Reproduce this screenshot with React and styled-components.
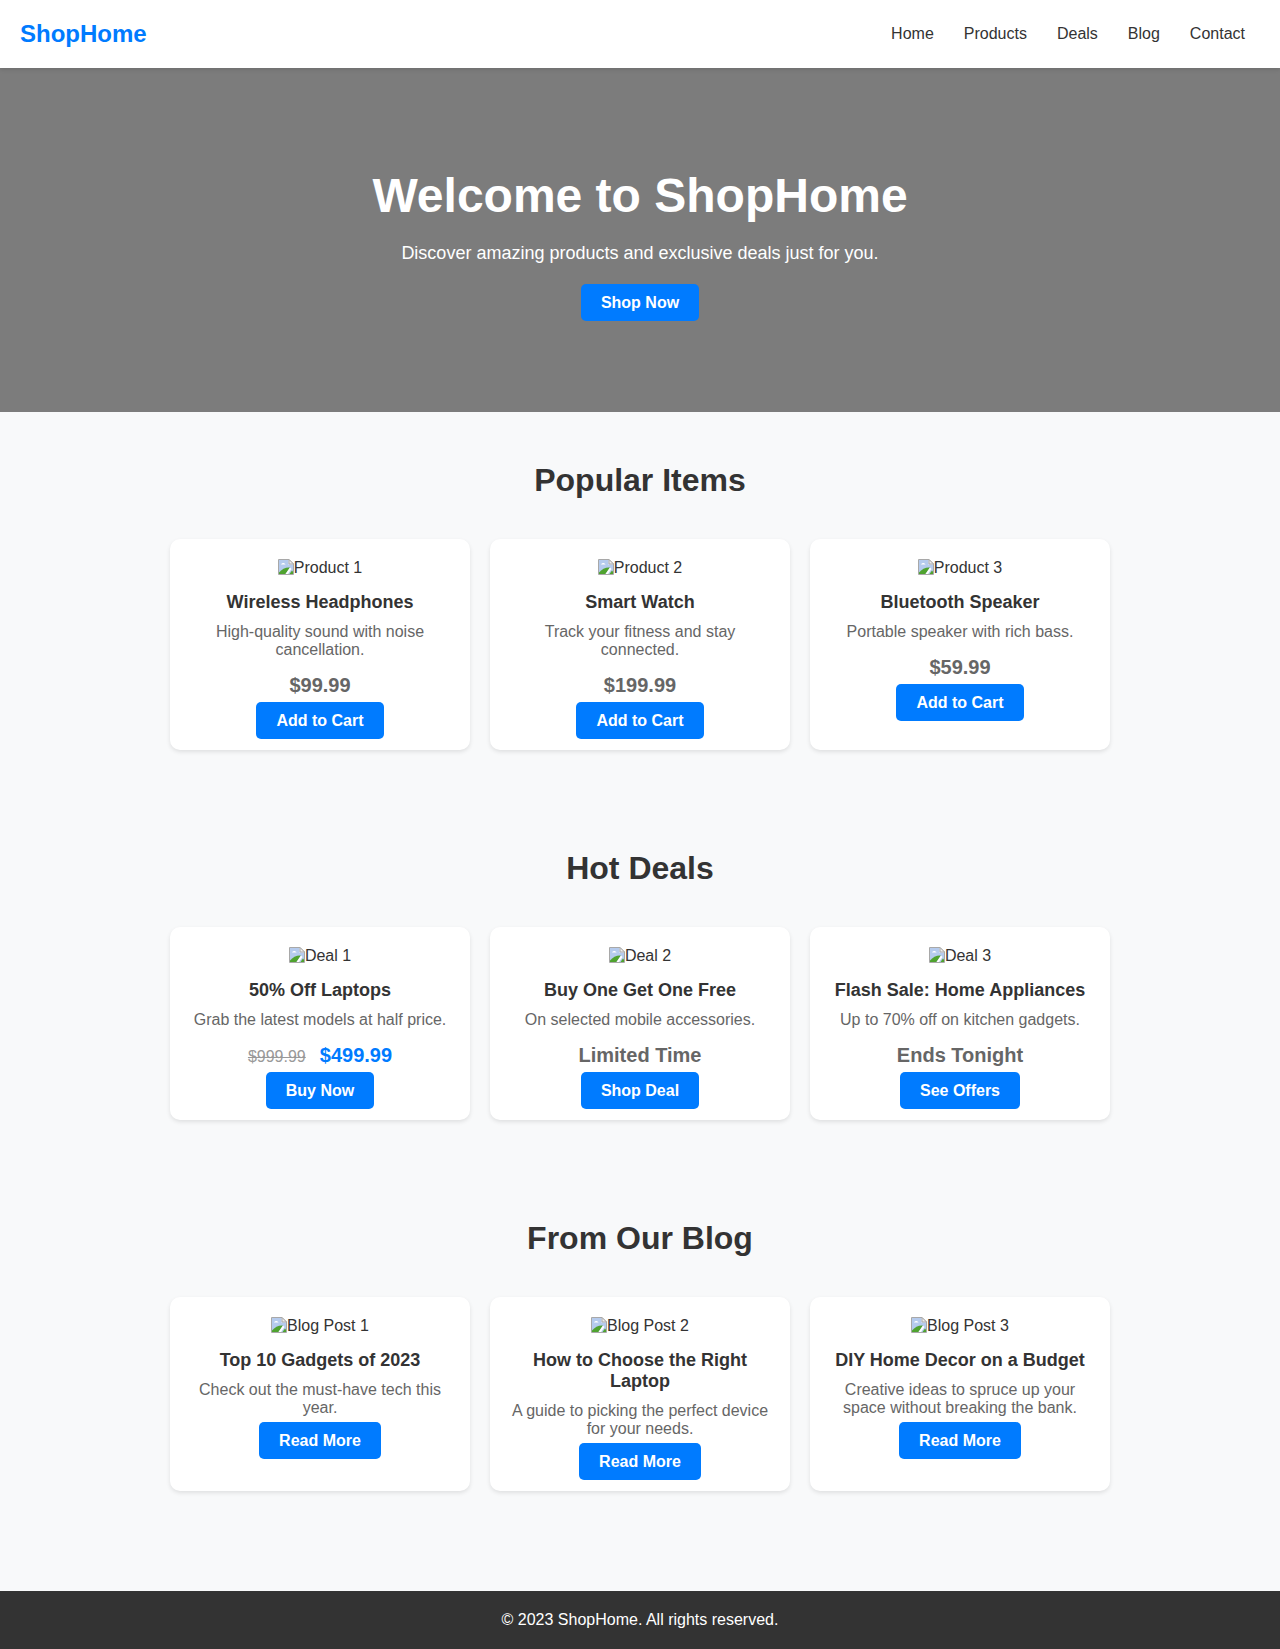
import React from 'react';
import styled, { createGlobalStyle } from 'styled-components';

const popular = [
  { alt: 'Product 1', title: 'Wireless Headphones', text: 'High-quality sound with noise cancellation.', price: '$99.99', action: 'Add to Cart' },
  { alt: 'Product 2', title: 'Smart Watch', text: 'Track your fitness and stay connected.', price: '$199.99', action: 'Add to Cart' },
  { alt: 'Product 3', title: 'Bluetooth Speaker', text: 'Portable speaker with rich bass.', price: '$59.99', action: 'Add to Cart' },
];

const deals = [
  { alt: 'Deal 1', title: '50% Off Laptops', text: 'Grab the latest models at half price.', oldPrice: '$999.99', newPrice: '$499.99', action: 'Buy Now' },
  { alt: 'Deal 2', title: 'Buy One Get One Free', text: 'On selected mobile accessories.', price: 'Limited Time', action: 'Shop Deal' },
  { alt: 'Deal 3', title: 'Flash Sale: Home Appliances', text: 'Up to 70% off on kitchen gadgets.', price: 'Ends Tonight', action: 'See Offers' },
];

const posts = [
  { alt: 'Blog Post 1', title: 'Top 10 Gadgets of 2023', text: 'Check out the must-have tech this year.', action: 'Read More' },
  { alt: 'Blog Post 2', title: 'How to Choose the Right Laptop', text: 'A guide to picking the perfect device for your needs.', action: 'Read More' },
  { alt: 'Blog Post 3', title: 'DIY Home Decor on a Budget', text: 'Creative ideas to spruce up your space without breaking the bank.', action: 'Read More' },
];

const navLinks = ['Home', 'Products', 'Deals', 'Blog', 'Contact'];

const BrokenImage = ({ alt }) => (
  <ImageAlt>
    <BrokenIcon viewBox="0 0 16 16" aria-hidden="true">
      <path d="M0.5 0.5H11L15.5 5V15.5H0.5Z" fill="#fff" stroke="#a8a8a8" />
      <path d="M1 1H10.5V5.5H15V15H1Z" fill="#b5cbee" />
      <path d="M3 5.5C4 3.5 6.5 3.5 7.5 5.5Z" fill="#fff" />
      <path d="M1 15V13.5C4 10 8 8 12 8.5L7.5 15Z" fill="#4fa32f" />
      <path d="M7.5 15L12 8.5L13.5 10L10 15Z" fill="#fff" />
      <path d="M11.5 15L14 11.5L15 12.5V15Z" fill="#4fa32f" />
      <path d="M11 0.5V5H15.5Z" fill="#eee" stroke="#a8a8a8" />
    </BrokenIcon>
    {alt}
  </ImageAlt>
);

const Card = ({ item }) => (
  <CardBox>
    <BrokenImage alt={item.alt} />
    <CardTitle>{item.title}</CardTitle>
    <CardText>{item.text}</CardText>
    {item.price && <Price>{item.price}</Price>}
    {item.newPrice && (
      <Price>
        <OldPrice>{item.oldPrice}</OldPrice>
        <NewPrice>{item.newPrice}</NewPrice>
      </Price>
    )}
    <Button>{item.action}</Button>
  </CardBox>
);

const Section = ({ title, items }) => (
  <SectionBox>
    <SectionTitle>{title}</SectionTitle>
    <CardGrid>
      {items.map((item) => (
        <Card key={item.alt} item={item} />
      ))}
    </CardGrid>
  </SectionBox>
);

const App = () => (
  <>
    <GlobalStyle />
    <Header>
      <Logo>ShopHome</Logo>
      <Nav>
        {navLinks.map((link) => (
          <NavLink key={link} href="#">
            {link}
          </NavLink>
        ))}
      </Nav>
    </Header>
    <Hero>
      <HeroTitle>Welcome to ShopHome</HeroTitle>
      <HeroText>Discover amazing products and exclusive deals just for you.</HeroText>
      <Button>Shop Now</Button>
    </Hero>
    <Section title="Popular Items" items={popular} />
    <Section title="Hot Deals" items={deals} />
    <Section title="From Our Blog" items={posts} />
    <Footer>© 2023 ShopHome. All rights reserved.</Footer>
  </>
);

const GlobalStyle = createGlobalStyle`
  * {
    box-sizing: border-box;
  }
  body {
    margin: 0;
    font-family: "Liberation Sans", Arial, sans-serif;
    background-color: #f8f9fa;
    color: #333;
  }
`;

const Header = styled.header`
  height: 68px;
  padding: 0 20px;
  display: flex;
  align-items: center;
  justify-content: space-between;
  background-color: #fff;
  box-shadow: 0 2px 4px rgba(0, 0, 0, 0.1);
  position: relative;
`;

const Logo = styled.div`
  font-size: 24px;
  font-weight: bold;
  color: #007bff;
`;

const Nav = styled.nav`
  display: flex;
  gap: 30px;
  padding-right: 15px;
`;

const NavLink = styled.a`
  font-size: 16px;
  color: #333;
  text-decoration: none;
`;

const Hero = styled.section`
  padding: 100px 20px 91px;
  display: flex;
  flex-direction: column;
  align-items: center;
  background-color: #7c7c7c;
  color: #fff;
  text-align: center;
`;

const HeroTitle = styled.h1`
  margin: 0 0 20px;
  font-size: 48px;
  line-height: 55px;
`;

const HeroText = styled.p`
  margin: 0 0 20px;
  font-size: 18px;
  line-height: 21px;
`;

const SectionBox = styled.section`
  padding: 50px 20px;
`;

const SectionTitle = styled.h2`
  margin: 0 0 40px;
  font-size: 32px;
  line-height: 37px;
  text-align: center;
`;

const CardGrid = styled.div`
  width: 940px;
  margin: 0 auto;
  display: grid;
  grid-template-columns: repeat(3, 300px);
  gap: 20px;
`;

const CardBox = styled.div`
  padding: 20px 20px 11px;
  background-color: #fff;
  border-radius: 10px;
  box-shadow: 0 2px 4px rgba(0, 0, 0, 0.1);
  text-align: center;
`;

const ImageAlt = styled.div`
  height: 18px;
  margin-bottom: 15px;
  display: flex;
  align-items: flex-start;
  justify-content: center;
  font-size: 16px;
  line-height: 18px;
`;

const BrokenIcon = styled.svg`
  width: 16px;
  height: 16px;
  flex: none;
`;

const CardTitle = styled.h3`
  margin: 0 0 10px;
  font-size: 18px;
  line-height: 21px;
`;

const CardText = styled.p`
  margin: 0 0 5px;
  font-size: 16px;
  line-height: 18px;
  color: #666;
`;

const Price = styled.div`
  height: 23px;
  margin: 15px 0 5px;
  font-size: 20px;
  line-height: 23px;
  font-weight: bold;
  color: #666;
`;

const OldPrice = styled.span`
  margin-right: 14px;
  font-size: 16px;
  font-weight: normal;
  color: #999;
  text-decoration: line-through;
`;

const NewPrice = styled.span`
  color: #007bff;
`;

const Button = styled.button`
  display: inline-block;
  height: 37px;
  padding: 0 20px;
  border: none;
  border-radius: 5px;
  background-color: #007bff;
  color: #fff;
  font-family: inherit;
  font-size: 16px;
  font-weight: bold;
`;

const Footer = styled.footer`
  height: 58px;
  margin-top: 50px;
  display: flex;
  align-items: center;
  justify-content: center;
  background-color: #333;
  color: #fff;
  font-size: 16px;
`;

export default App;
